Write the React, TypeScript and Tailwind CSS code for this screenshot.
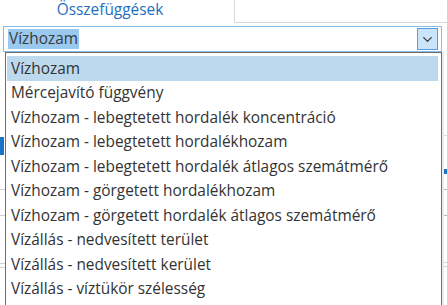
import { ChevronDown } from 'lucide-react';

const items = [
  'Vízhozam',
  'Mércejavító függvény',
  'Vízhozam - lebegtetett hordalék koncentráció',
  'Vízhozam - lebegtetett hordalékhozam',
  'Vízhozam - lebegtetett hordalék átlagos szemátmérő',
  'Vízhozam - görgetett hordalékhozam',
  'Vízhozam - görgetett hordalék átlagos szemátmérő',
  'Vízállás - nedvesített terület',
  'Vízállás - nedvesített kerület',
  'Vízállás - víztükör szélesség',
];

export default function App() {
  return (
    <div
      className="relative w-[447px] h-[305px] overflow-hidden bg-white text-[15.4px] text-[#333]"
      style={{ fontFamily: '"Open Sans", "Noto Sans", sans-serif' }}
    >
      {/* tab strip */}
      <div className="flex h-[23px]">
        <div className="w-[234px] flex justify-center pr-[14px] text-[#1f6fc0] leading-[20px]">Összefüggések</div>
        <div className="flex-1 border-l border-b border-[#d6d6d6]" />
      </div>

      {/* combobox */}
      <div className="ml-[3px] mt-[3px] w-[439px] h-[26px] border border-[#86bde8] flex items-center pl-[4px] pr-[3px]">
        <span className="bg-[#99c9ef] text-[#3a3a3a] leading-[20px] px-[1px]">Vízhozam</span>
        <div className="ml-auto w-[21px] h-[22px] bg-[#cce4f7] border border-[#569de5] flex items-center justify-center">
          <ChevronDown size={15} strokeWidth={2.2} className="text-[#3d3d3d]" />
        </div>
      </div>

      {/* page content behind the open list */}
      <div className="flex justify-between h-[260px]">
        <div className="w-[5px] flex flex-col">
          <div className="mt-[85px] h-[18px] w-[4px] bg-[#1a73c8]" />
          <div className="mt-[34px] h-px bg-[#cfcfcf]" />
          <div className="mt-[25px] h-px bg-[#cfcfcf]" />
          <div className="mt-[47px] h-px bg-[#cfcfcf]" />
          <div className="mt-[3px] h-px bg-[#cfcfcf]" />
        </div>
        <div className="w-[6px] flex flex-col">
          <div className="mt-[83px] h-px bg-[#dedede]" />
          <div className="mt-[33px] h-[5px] bg-[#1a73c8]" />
          <div className="mt-[15px] h-px bg-[#b5b5b5]" />
          <div className="mt-[25px] h-px bg-[#b5b5b5]" />
          <div className="mt-[46px] h-px bg-[#cfcfcf]" />
          <div className="mt-[3px] h-px bg-[#cfcfcf]" />
        </div>
      </div>

      {/* dropdown list */}
      <div className="absolute left-[5px] top-[52px] w-[437px] h-[270px] border border-[#6e6e6e] bg-white px-[1px] pt-[3px] shadow-[2px_0_0_#ececec]">
        {items.map((item, i) => (
          <div
            key={item}
            className={`h-[24.5px] flex items-center pl-[4px] whitespace-nowrap ${i === 0 ? 'bg-[#bcd9ee] mr-[2px]' : ''}`}
          >
            {item}
          </div>
        ))}
      </div>
    </div>
  );
}
